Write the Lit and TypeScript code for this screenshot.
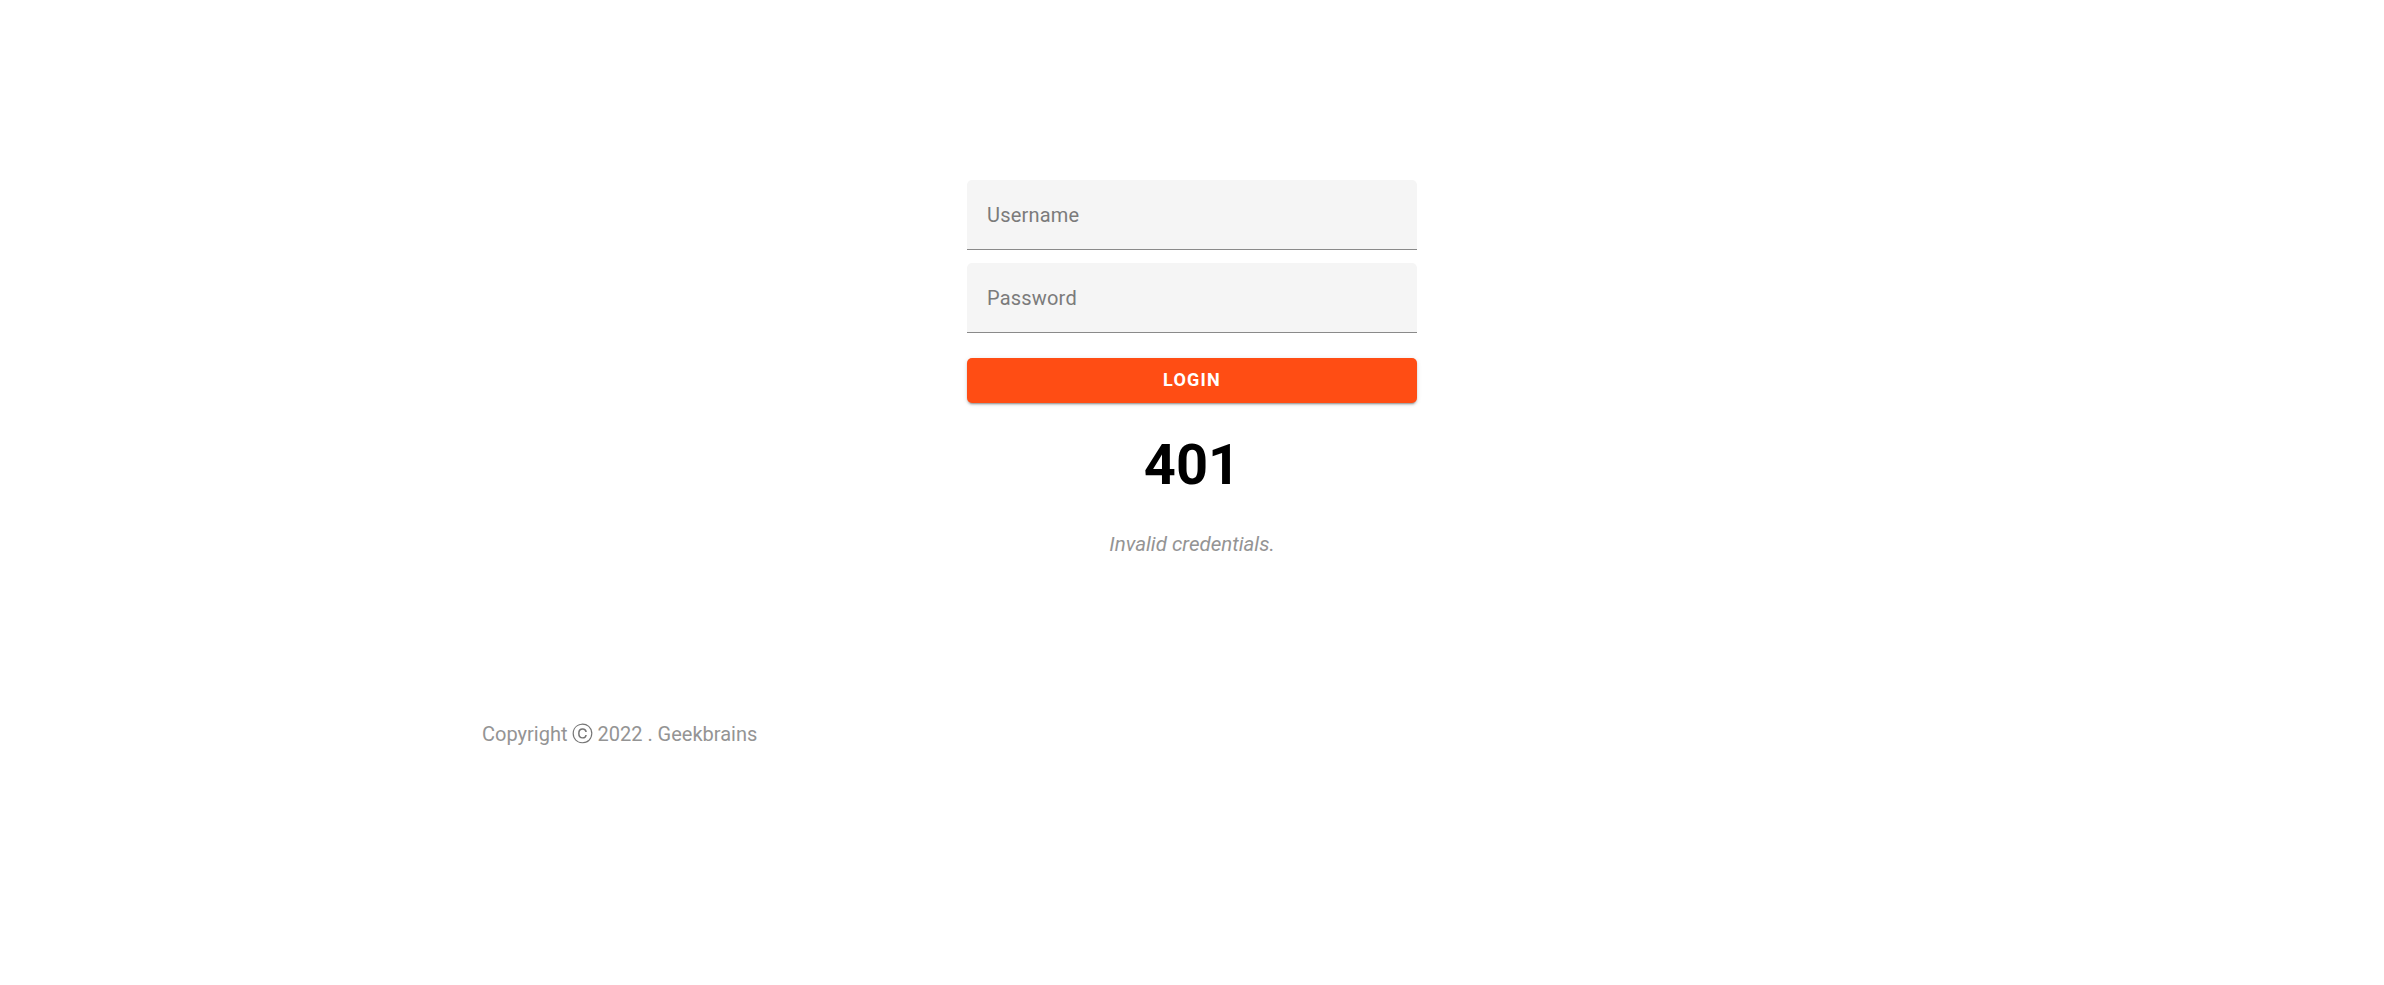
import { LitElement, html, css } from "lit";
import { customElement } from "lit/decorators.js";

@customElement("app-root")
class AppRoot extends LitElement {
  static styles = css`
    :host { display: block; min-height: 985px; background: #fff; font-family: Roboto, sans-serif; }
    main { width: 450px; margin: 0 auto; padding-top: 180px; display: flex; flex-direction: column; }
    .field { box-sizing: border-box; height: 70px; padding: 0 20px; margin-bottom: 13px; display: flex; align-items: center; background: #f5f5f5; border-bottom: 1px solid #8a8a8a; border-radius: 5px 5px 0 0; font-size: 20px; letter-spacing: 0.19px; color: #7b7b7b; }
    button { height: 45px; margin: 12px 0 0; padding: 0 0 2px; border: 0; border-radius: 5px; background: #ff4d14; color: #fff; font: 700 18px/43px Roboto, sans-serif; letter-spacing: 1.2px; box-shadow: 0 3px 1px -2px rgba(0,0,0,.2), 0 2px 2px rgba(0,0,0,.14), 0 1px 5px rgba(0,0,0,.12); }
    h1 { margin: 27px 0 0; text-align: center; font: 700 56px/70px Roboto, sans-serif; color: #000; }
    .msg { margin: 29px 0 0; text-align: center; font-size: 20.5px; line-height: 30px; font-style: italic; color: #949494; }
    footer { margin: 160px 0 0 482px; font-size: 20px; line-height: 30px; color: #949494; display: flex; }
    .mark { width: 20px; margin: 0 5px; display: flex; justify-content: center; font-size: 21px; font-weight: 300; color: #757575; will-change: transform; }
  `;
  render() {
    return html`
      <main>
        <div class="field">Username</div>
        <div class="field">Password</div>
        <button>LOGIN</button>
        <h1>401</h1>
        <p class="msg">Invalid credentials.</p>
      </main>
      <footer>
        <span>Copyright</span>
        <span class="mark">ⓒ</span>
        <span>2022 . Geekbrains</span>
      </footer>
    `;
  }
}
